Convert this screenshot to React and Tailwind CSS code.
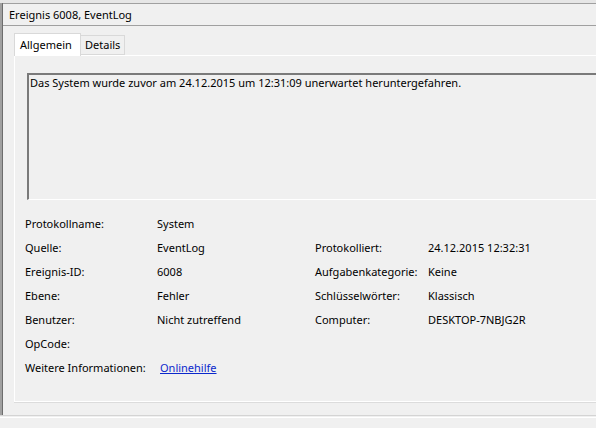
import React from "react";

const rows = [
  ["Protokollname:", "System", "", ""],
  ["Quelle:", "EventLog", "Protokolliert:", "24.12.2015 12:32:31"],
  ["Ereignis-ID:", "6008", "Aufgabenkategorie:", "Keine"],
  ["Ebene:", "Fehler", "Schlüsselwörter:", "Klassisch"],
  ["Benutzer:", "Nicht zutreffend", "Computer:", "DESKTOP-7NBJG2R"],
  ["OpCode:", "", "", ""],
];

export default function App() {
  return (
    <div
      className="w-[596px] h-[428px] overflow-hidden bg-[#f0f0f0] text-black text-[11px] flex flex-col"
      style={{ fontFamily: '"Noto Sans", "Open Sans", sans-serif' }}
    >
      {/* thin strip above the window frame */}
      <div className="h-[3px] bg-[#e6e6e6] shrink-0" />

      <div className="flex h-[412px] shrink-0">
        {/* left frame edge */}
        <div className="w-[3px] shrink-0 flex">
          <div className="w-[2px] bg-[#a0a0a0]" />
          <div className="w-[1px] bg-[#6d6d6d]" />
        </div>

        <div className="flex-1 flex flex-col border-t border-[#a0a0a0] min-w-0">
          {/* title row */}
          <div className="h-[22px] flex items-center pl-[6px] pt-[2px] shrink-0 border-b border-[#a0a0a0]">
            Ereignis 6008, EventLog
          </div>

          {/* tabs */}
          <div className="flex items-end pl-[11px] pt-[7px] shrink-0">
            <div className="h-[23px] w-[67px] bg-white border border-b-0 border-[#d9d9d9] flex items-center pl-[5px] relative z-10 -mb-px">
              Allgemein
            </div>
            <div className="h-[20px] w-[44px] bg-[#f0f0f0] border border-l-0 border-[#d9d9d9] flex items-center pl-[4px]">
              Details
            </div>
          </div>

          {/* tab page */}
          <div className="ml-[11px] h-[347px] border-l border-t border-b border-white shadow-[0_1px_0_#dcdcdc] flex flex-col shrink-0">
            {/* description box */}
            <div className="ml-[12px] mt-[17px] h-[127px] border-t-2 border-l-2 border-t-[#7a7a7a] border-l-[#7a7a7a] border-b border-b-white pl-[1px] leading-[16px] whitespace-nowrap shrink-0">
              Das System wurde zuvor am 24.12.2015 um 12:31:09 unerwartet heruntergefahren.
            </div>

            {/* property grid */}
            <div className="mt-[12px] ml-[10px] grid grid-cols-[132px_158px_113px_1fr]">
              {rows.map((r, i) => (
                <React.Fragment key={i}>
                  <div className="h-[24px] leading-[24px] whitespace-nowrap">{r[0]}</div>
                  <div className="h-[24px] leading-[24px] whitespace-nowrap">{r[1]}</div>
                  <div className="h-[24px] leading-[24px] whitespace-nowrap">{r[2]}</div>
                  <div className="h-[24px] leading-[24px] whitespace-nowrap">{r[3]}</div>
                </React.Fragment>
              ))}
              <div className="h-[24px] leading-[24px] whitespace-nowrap">Weitere Informationen:</div>
              <div className="h-[24px] leading-[24px] whitespace-nowrap pl-[3px] col-span-3">
                <a href="#" className="text-[#0b28cc] underline">Onlinehilfe</a>
              </div>
            </div>
          </div>
        </div>
      </div>

      {/* bottom frame lines */}
      <div className="border-t border-[#d4d4d4] shrink-0" />
      <div className="h-[1px] shrink-0" />
      <div className="border-t border-white shrink-0" />
    </div>
  );
}
